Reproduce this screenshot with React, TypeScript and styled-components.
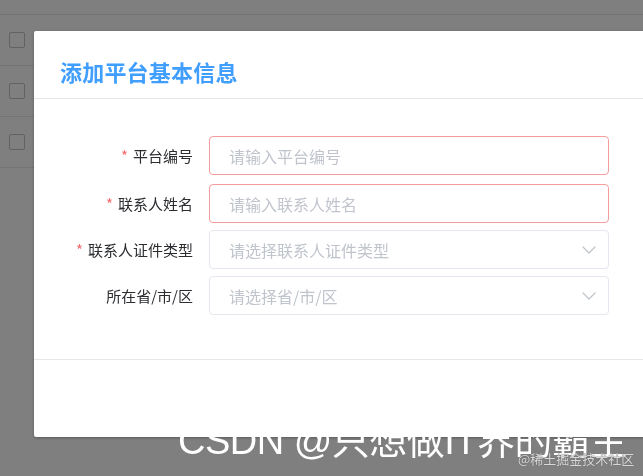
import React from "react";
import styled, { createGlobalStyle } from "styled-components";
import { ChevronDown } from "lucide-react";

const GlobalStyle = createGlobalStyle`
  html, body {
    margin: 0;
    padding: 0;
    width: 643px;
    height: 476px;
    overflow: hidden;
    background: #fff;
    font-family: "Noto Sans CJK SC", "Noto Sans", sans-serif;
  }
`;

interface Field {
  label: string;
  placeholder: string;
  required?: boolean;
  error?: boolean;
  select?: boolean;
}

const fields: Field[] = [
  { label: "平台编号", placeholder: "请输入平台编号", required: true, error: true },
  { label: "联系人姓名", placeholder: "请输入联系人姓名", required: true, error: true },
  { label: "联系人证件类型", placeholder: "请选择联系人证件类型", required: true, select: true },
  { label: "所在省/市/区", placeholder: "请选择省/市/区", select: true },
];

const App: React.FC = () => {
  return (
    <>
      <GlobalStyle />
      <Table>
        <HeadRow />
        {[0, 1, 2].map((i) => (
          <Row key={i}>
            <Checkbox />
          </Row>
        ))}
      </Table>
      <Mask />
      <Dialog>
        <Header>
          <Title>添加平台基本信息</Title>
        </Header>
        <Body>
          {fields.map((f, i) => (
            <FormItem key={f.label} $gap={i === 0 ? 9 : 7}>
              <Label>
                {f.required && <Star>*</Star>}
                {f.label}
              </Label>
              <Input $error={f.error}>
                <Placeholder>{f.placeholder}</Placeholder>
                {f.select && <ChevronDown size={24} strokeWidth={1.2} color="#bfc3ca" />}
              </Input>
            </FormItem>
          ))}
        </Body>
        <Footer />
      </Dialog>
      <Watermark>CSDN @只想做IT界的霸主</Watermark>
      <SubMark>@稀土掘金技术社区</SubMark>
    </>
  );
};

const Table = styled.div`
  display: flex;
  flex-direction: column;
`;

const HeadRow = styled.div`
  height: 14px;
  border-bottom: 1px solid #e6e8ee;
`;

const Row = styled.div`
  height: 50px;
  border-bottom: 1px solid #e6e8ee;
  display: flex;
  align-items: center;
  padding-left: 9px;
`;

const Checkbox = styled.div`
  width: 14px;
  height: 14px;
  border: 1px solid #c4c4c4;
  border-radius: 2px;
  background: #fff;
`;

const Mask = styled.div`
  position: fixed;
  inset: 0;
  background: rgba(0, 0, 0, 0.5);
`;

const Dialog = styled.div`
  position: fixed;
  top: 31px;
  left: 34px;
  width: 640px;
  background: #fff;
  border-radius: 2px;
  box-shadow: 0 1px 3px rgba(0, 0, 0, 0.3);
  display: flex;
  flex-direction: column;
`;

const Header = styled.div`
  height: 68px;
  box-sizing: border-box;
  padding: 12px 0 0 26px;
  display: flex;
  align-items: center;
  border-bottom: 1px solid #e6e6e6;
`;

const Title = styled.h2`
  margin: 0;
  font-size: 22px;
  font-weight: 700;
  color: #409eff;
  letter-spacing: 0.2px;
`;

const Body = styled.div`
  height: 261px;
  padding-top: 37px;
  box-sizing: border-box;
  display: flex;
  flex-direction: column;
  border-bottom: 1px solid #e6e6e6;
`;

const FormItem = styled.div<{ $gap: number }>`
  display: flex;
  align-items: center;
  margin-bottom: ${(p) => p.$gap}px;
`;

const Label = styled.label`
  width: 159px;
  padding-right: 16px;
  text-align: right;
  font-size: 15px;
  color: #2b2d30;
`;

const Star = styled.span`
  color: #f56c6c;
  margin-right: 5px;
`;

const Input = styled.div<{ $error?: boolean }>`
  width: 400px;
  height: 39px;
  box-sizing: border-box;
  border: 1px solid ${(p) => (p.$error ? "#f29c9c" : "#e4e7ed")};
  border-radius: 4px;
  padding: 0 7px 0 19px;
  display: flex;
  align-items: center;
  justify-content: space-between;
`;

const Placeholder = styled.span`
  font-size: 16px;
  color: #c0c4cc;
`;

const Footer = styled.div`
  height: 77px;
`;

const Watermark = styled.div`
  position: fixed;
  left: 178px;
  top: 410px;
  font-family: "Liberation Sans", "Noto Sans CJK SC", sans-serif;
  font-size: 38px;
  letter-spacing: -0.5px;
  color: #fff;
  white-space: nowrap;
`;

const SubMark = styled.div`
  position: fixed;
  left: 518px;
  top: 449px;
  font-size: 13px;
  color: #d8d8d8;
  text-shadow: 0 0 1px #555;
  white-space: nowrap;
`;

export default App;
